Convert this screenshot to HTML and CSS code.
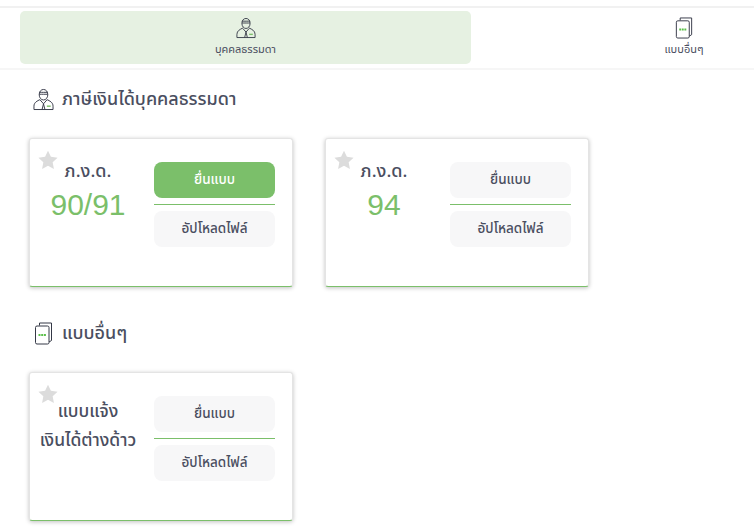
FILE: index.html
```html
<!DOCTYPE html>
<html lang="th">
<head>
    <meta charset="UTF-8">
    <meta name="viewport" content="width=device-width, initial-scale=1.0">
    <title>ภาษีเงินได้บุคคลธรรมดา</title>
    <link rel="stylesheet" href="styles.css">
</head>
<body>
    <svg class="icon-defs" width="0" height="0">
        <symbol id="icon-person" viewBox="0 0 22 23">
            <g fill="none" stroke="#343846" stroke-width="1">
                <path d="M6.500 6.500c0-3.500 2-5.500 4.500-5.500s4.500 2 4.500 5.500c0 3-2 5.500-4.500 5.500s-4.500-2.500-4.500-5.500z"/>
                <path d="M6.500 6c2.500 0 7 0 9 0M6.500 4c2.500 0 7 0 9 0"/>
                <path d="M7.500 11.500c-3 1.500-6.500 3-6.500 7v3.500h20v-3.500c0-4-3.500-5.500-6.500-7"/>
                <path d="M7.500 12l3.500 4 3.500-4M9.500 22l1.500-6 1.500 6"/>
            </g>
            <path d="M14.500 18.500h4" stroke="#7bbf6a" stroke-width="1.500"/>
        </symbol>
        <symbol id="icon-forms" viewBox="0 0 18 23">
            <g fill="none" stroke="#343846" stroke-width="1">
                <path d="M5 3.500v-2.500h12v17.500l-2.500 1.500"/>
                <rect x="1" y="4" width="13.500" height="18" rx="1.500"/>
            </g>
            <path d="M4 13h7.500" stroke="#5cc04a" stroke-width="2" stroke-dasharray="2 .7"/>
        </symbol>
        <symbol id="icon-star" viewBox="0 0 24 24">
            <path fill="#dcdcdc" d="M12 .8l3.500 7.400 8 1-5.900 5.500 1.500 8L12 18.800l-7.100 3.900 1.500-8L.5 9.200l8-1z"/>
        </symbol>
    </svg>

    <nav class="tabs">
        <a class="tab tab-active" href="#">
            <svg class="tab-icon"><use href="#icon-person"/></svg>
            <span>บุคคลธรรมดา</span>
        </a>
        <a class="tab tab-other" href="#">
            <svg class="tab-icon"><use href="#icon-forms"/></svg>
            <span>แบบอื่นๆ</span>
        </a>
    </nav>

    <main class="content">
        <h2 class="section-title section-first">
            <svg class="section-icon"><use href="#icon-person"/></svg>
            ภาษีเงินได้บุคคลธรรมดา
        </h2>
        <div class="card-row">
            <div class="card">
                <svg class="star"><use href="#icon-star"/></svg>
                <div class="card-info">
                    <div class="card-name">ภ.ง.ด.</div>
                    <div class="card-number">90/91</div>
                </div>
                <div class="card-actions">
                    <button class="btn btn-primary">ยื่นแบบ</button>
                    <hr class="btn-line">
                    <button class="btn">อัปโหลดไฟล์</button>
                </div>
            </div>
            <div class="card">
                <svg class="star"><use href="#icon-star"/></svg>
                <div class="card-info">
                    <div class="card-name">ภ.ง.ด.</div>
                    <div class="card-number">94</div>
                </div>
                <div class="card-actions">
                    <button class="btn">ยื่นแบบ</button>
                    <hr class="btn-line">
                    <button class="btn">อัปโหลดไฟล์</button>
                </div>
            </div>
        </div>

        <h2 class="section-title section-other">
            <svg class="section-icon"><use href="#icon-forms"/></svg>
            แบบอื่นๆ
        </h2>
        <div class="card-row">
            <div class="card">
                <svg class="star"><use href="#icon-star"/></svg>
                <div class="card-info">
                    <div class="card-name card-name-long">แบบแจ้ง<br>เงินได้ต่างด้าว</div>
                </div>
                <div class="card-actions">
                    <button class="btn">ยื่นแบบ</button>
                    <hr class="btn-line">
                    <button class="btn">อัปโหลดไฟล์</button>
                </div>
            </div>
        </div>
    </main>
</body>
</html>
```

FILE: styles.css
```css
* {
    margin: 0;
    padding: 0;
    box-sizing: border-box;
}

body {
    font-family: 'Noto Sans Thai', 'Noto Sans', 'Liberation Sans', sans-serif;
    height: 530px;
    overflow: hidden;
    background: #fff;
    color: #4a4e60;
}

.icon-defs {
    display: block;
    height: 0;
}

.tabs {
    display: flex;
    justify-content: space-between;
    margin-top: 6px;
    height: 64px;
    padding: 3px 50px 0 20px;
    border-top: 2px solid #f1f1f1;
    border-bottom: 2px solid #f6f6f6;
}

.tab {
    display: flex;
    flex-direction: column;
    align-items: center;
    height: 53px;
    padding-top: 6px;
    font-size: 11px;
    line-height: 14px;
    color: #4a4e60;
    text-decoration: none;
}

.tab-active {
    width: 451px;
    background: #e6f1e2;
    border-radius: 5px;
}

.tab-other {
    width: 40px;
}

.tab-icon {
    width: 20px;
    height: 22px;
    margin-bottom: 4px;
}

.content {
    padding: 17px 0 0 33px;
}

.section-title {
    display: flex;
    align-items: center;
    gap: 8px;
    height: 24px;
    font-size: 18px;
    font-weight: 500;
    color: #4a4e60;
}

.section-icon {
    width: 21px;
    height: 23px;
}

.section-first {
    margin-bottom: 27px;
}

.section-other {
    margin-top: 34px;
    margin-bottom: 27px;
}

.card-row {
    display: flex;
    gap: 32px;
    margin-left: -4px;
}

.card {
    position: relative;
    display: flex;
    width: 264px;
    height: 149px;
    padding: 23px 17px 0 0;
    background: #fff;
    border: 1px solid #e4e4e4;
    border-bottom: 1px solid #7bbf6a;
    border-radius: 3px;
    box-shadow: 0 1px 4px rgba(0, 0, 0, 0.25);
}

.star {
    position: absolute;
    top: 11px;
    left: 8px;
    width: 20px;
    height: 20px;
}

.card-info {
    width: 116px;
    margin-right: 8px;
    text-align: center;
}

.card-name {
    font-size: 18px;
    font-weight: 500;
    line-height: 20px;
}

.card-name-long {
    margin-top: 1px;
    line-height: 29px;
    font-size: 17.500px;
}

.card-number {
    margin-top: 6px;
    font-family: 'Liberation Sans', sans-serif;
    font-size: 30px;
    line-height: 34px;
    color: #7bbf6a;
}

.card-actions {
    width: 121px;
}

.btn {
    display: block;
    width: 100%;
    height: 36px;
    font-family: inherit;
    font-size: 13.500px;
    font-weight: 500;
    color: #4a4e60;
    background: #f7f7f8;
    border: none;
    border-radius: 8px;
}

.btn-primary {
    background: #7bbf6a;
    color: #fff;
}

.btn-line {
    margin: 6px 0;
    border: none;
    border-top: 1px solid #7bbf6a;
}
```
